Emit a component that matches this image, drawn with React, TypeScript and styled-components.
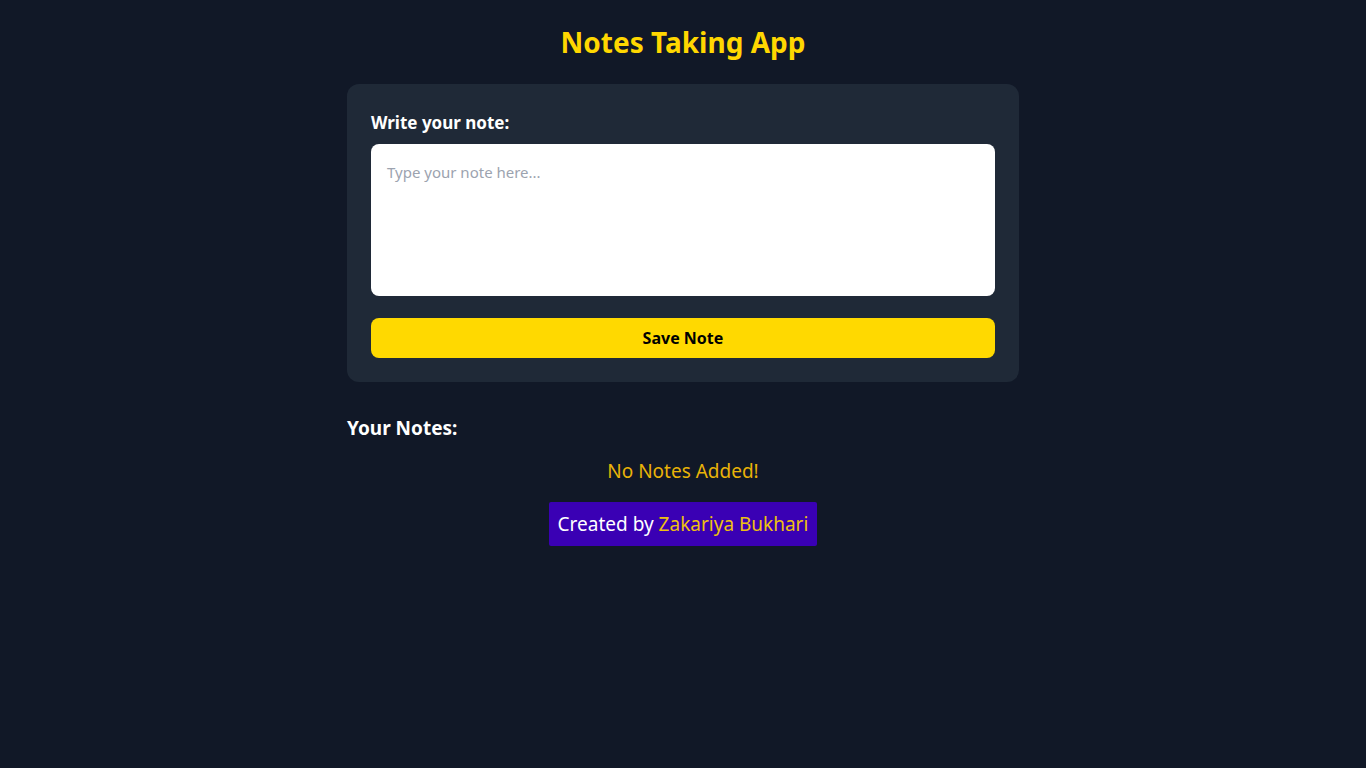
import React, { useState } from 'react';
import styled, { createGlobalStyle } from 'styled-components';

const GlobalStyle = createGlobalStyle`
  * {
    box-sizing: border-box;
  }

  body {
    margin: 0;
    background: #111827;
    font-family: 'Noto Sans', 'Open Sans', sans-serif;
    color: #ffffff;
  }
`;

export default function App() {
  const [note, setNote] = useState('');
  const [notes, setNotes] = useState<string[]>([]);

  const saveNote = () => {
    if (!note.trim()) return;
    setNotes([...notes, note.trim()]);
    setNote('');
  };

  return (
    <Page>
      <GlobalStyle />
      <Title>Notes Taking App</Title>
      <Card>
        <Label htmlFor="note">Write your note:</Label>
        <NoteInput
          id="note"
          placeholder="Type your note here..."
          value={note}
          onChange={(e) => setNote(e.target.value)}
        />
        <SaveButton onClick={saveNote}>Save Note</SaveButton>
      </Card>
      <NotesSection>
        <SectionTitle>Your Notes:</SectionTitle>
        {notes.length === 0 ? (
          <Empty>No Notes Added!</Empty>
        ) : (
          notes.map((n, i) => <NoteItem key={i}>{n}</NoteItem>)
        )}
      </NotesSection>
      <Footer>
        Created by <Author>Zakariya Bukhari</Author>
      </Footer>
    </Page>
  );
}

const Page = styled.div`
  min-height: 100vh;
  padding: 24px 16px;
  display: flex;
  flex-direction: column;
  align-items: center;
`;

const Title = styled.h1`
  margin: 0 0 24px;
  font-size: 28px;
  line-height: 36px;
  font-weight: 700;
  color: #ffd700;
`;

const Card = styled.div`
  width: 672px;
  padding: 24px;
  border-radius: 12px;
  background: #1f2937;
  display: flex;
  flex-direction: column;
`;

const Label = styled.label`
  font-size: 17px;
  line-height: 28px;
  font-weight: 700;
  margin: 1px 0 7px;
`;

const NoteInput = styled.textarea`
  height: 152px;
  padding: 16px;
  border: none;
  border-radius: 8px;
  background: #ffffff;
  color: #111827;
  font-family: inherit;
  font-size: 15px;
  line-height: 24px;
  resize: none;
  outline: none;

  &::placeholder {
    color: #9ca3af;
  }
`;

const SaveButton = styled.button`
  margin-top: 22px;
  height: 40px;
  border: none;
  border-radius: 8px;
  background: #ffd900;
  color: #000000;
  font-family: inherit;
  font-size: 16px;
  font-weight: 700;
  cursor: pointer;
`;

const NotesSection = styled.div`
  width: 672px;
  margin-top: 32px;
  display: flex;
  flex-direction: column;
`;

const SectionTitle = styled.h2`
  margin: 0;
  font-size: 19px;
  line-height: 28px;
  font-weight: 700;
`;

const Empty = styled.p`
  margin: 15px 0 0;
  text-align: center;
  font-size: 19px;
  line-height: 28px;
  color: #eab308;
`;

const NoteItem = styled.div`
  margin-top: 12px;
  padding: 12px 16px;
  border-radius: 8px;
  background: #1f2937;
`;

const Footer = styled.div`
  margin-top: 17px;
  padding: 8px 9px;
  border-radius: 2px;
  background: #3a00b4;
  font-size: 19px;
  line-height: 28px;
  color: #ffffff;
`;

const Author = styled.span`
  color: #eec10f;
`;
